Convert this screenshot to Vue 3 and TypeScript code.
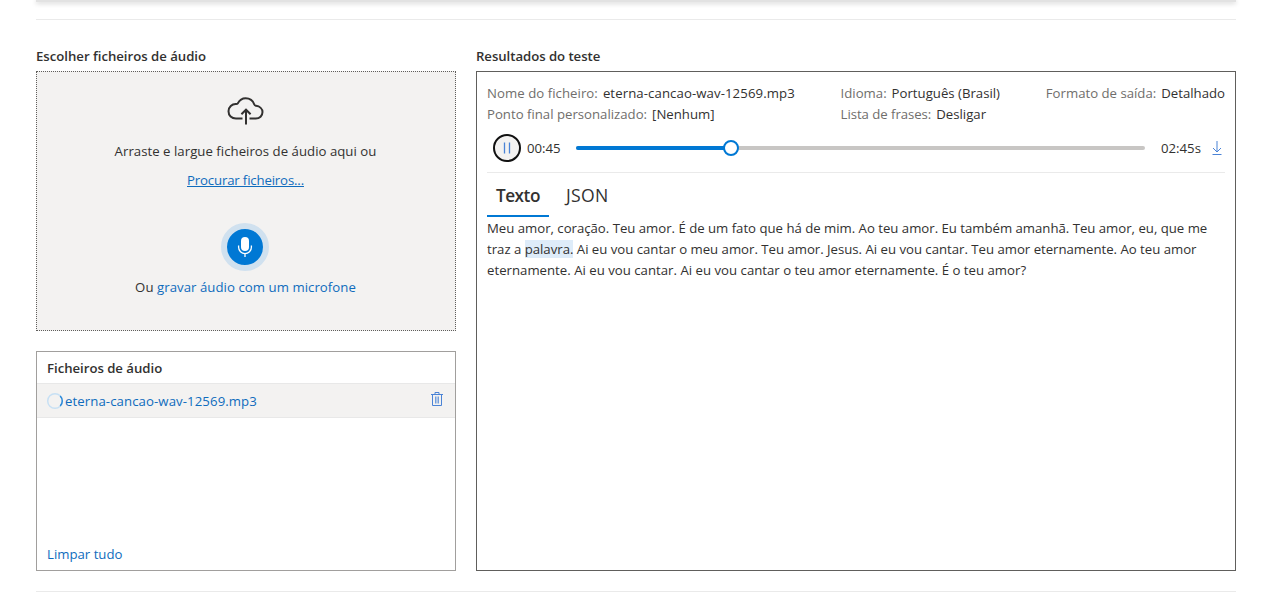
<script setup lang="ts">
interface Detail {
  label: string
  value: string
  key: string
}

const details: Detail[][] = [
  [
    { label: 'Nome do ficheiro:', value: 'eterna-cancao-wav-12569.mp3', key: 'name' },
    { label: 'Ponto final personalizado:', value: '[Nenhum]', key: 'endpoint' },
  ],
  [
    { label: 'Idioma:', value: 'Português (Brasil)', key: 'lang' },
    { label: 'Lista de frases:', value: 'Desligar', key: 'phrases' },
  ],
  [{ label: 'Formato de saída:', value: 'Detalhado', key: 'format' }],
]

const elapsed = 45
const total = 165
const progress = `${((elapsed / total) * 100).toFixed(2)}%`
</script>

<template>
  <main class="page">
    <div class="card-edge"></div>
    <hr class="rule rule-top" />
    <div class="columns">
      <section class="left">
        <h2 class="heading">Escolher ficheiros de áudio</h2>
        <div class="dropzone">
          <svg class="cloud" width="38" height="28" viewBox="0 0 38 28" fill="none" stroke="#323130" stroke-width="2">
            <path d="M16.500 21.600H10C5.600 21.600 2.500 18.400 2.500 14.200c0-4.200 3.500-7.400 7.500-7.200.9.050 1.300 0 1.800-.6C13.600 3 16.300 1.300 19.600 1.300c4.100 0 7.400 2.500 8.700 6.200.3.900.8 1.200 1.700 1.300 3.700.4 6.500 3 6.500 6.300 0 3.700-2.900 6.500-6.700 6.500h-6.300" />
            <path d="M20 27.500V13M15.400 17.300l4.600-4.600 4.600 4.600" />
          </svg>
          <p class="drop-text">Arraste e largue ficheiros de áudio aqui ou</p>
          <a class="browse">Procurar ficheiros...</a>
          <div class="mic">
            <svg width="16" height="22" viewBox="0 0 16 22">
              <rect x="4" y="1" width="8" height="14" rx="4" fill="#fff" />
              <path d="M1.600 9.500v1.700a6.400 6.400 0 0 0 12.800 0V9.500M8 17.500V21" fill="none" stroke="#fff" stroke-width="1.300" />
            </svg>
          </div>
          <p class="record">Ou <a>gravar áudio com um microfone</a></p>
        </div>
        <div class="files">
          <h3 class="files-title">Ficheiros de áudio</h3>
          <div class="file-row">
            <svg class="spinner" width="18" height="18" viewBox="0 0 18 18" fill="none" stroke-width="1.500">
              <circle cx="9" cy="9" r="7.300" stroke="#c7e0f4" />
              <path d="M14.200 3.900A7.300 7.300 0 0 1 14.200 14.100" stroke="#2b88d8" />
            </svg>
            <a class="file-name">eterna-cancao-wav-12569.mp3</a>
            <svg class="trash" width="12" height="15" viewBox="0 0 12 15" fill="none" stroke="#4a83d6">
              <path d="M0 2.500h12M4 2.500v-2h4v2M1.500 2.500v11h9v-11" />
              <path d="M4.500 4.500v7M6 4.500v7M7.500 4.500v7" stroke-opacity=".75" />
            </svg>
          </div>
          <a class="clear">Limpar tudo</a>
        </div>
      </section>
      <section class="right">
        <h2 class="heading results-heading">Resultados do teste</h2>
        <div class="results">
          <div class="details">
            <div v-for="(group, i) in details" :key="i" class="detail-group">
              <div v-for="d in group" :key="d.key" class="detail" :class="d.key">
                <span class="label">{{ d.label }}</span><span class="value">{{ d.value }}</span>
              </div>
            </div>
          </div>
          <div class="player">
            <button class="pause" aria-label="Pausa">
              <svg width="8" height="12" viewBox="0 0 8 12" stroke="#4a83d6" stroke-width="1.300"><path d="M1.500 0.500v11M6.500 0.500v11" /></svg>
            </button>
            <span class="time">00:45</span>
            <div class="track">
              <div class="fill" :style="{ width: progress }"><i class="thumb"></i></div>
            </div>
            <span class="time end">02:45s</span>
            <svg class="download" width="10" height="14" viewBox="0 0 10 14" fill="none" stroke="#4a83d6">
              <path d="M5 0v11M1 7l4 4 4-4M0.500 13.500h9" />
            </svg>
          </div>
          <div class="tabs">
            <div class="tab active">Texto</div>
            <div class="tab json">JSON</div>
          </div>
          <div class="transcript">
            <p>Meu amor, coração. Teu amor. É de um fato que há de mim. Ao teu amor. Eu também amanhã. Teu amor, eu, que me</p>
            <p>traz a <mark>palavra.</mark> Ai eu vou cantar o meu amor. Teu amor. Jesus. Ai eu vou cantar. Teu amor eternamente. Ao teu amor</p>
            <p class="last">eternamente. Ai eu vou cantar. Ai eu vou cantar o teu amor eternamente. É o teu amor?</p>
          </div>
        </div>
      </section>
    </div>
    <hr class="rule rule-bottom" />
  </main>
</template>

<style>
body { background: #fff; overflow: hidden; }
</style>

<style scoped>
.page { box-sizing: border-box; width: 1287px; height: 598px; overflow: hidden; padding: 0 51px 0 36px; font: 13.2px/21px "Open Sans", "Noto Sans", sans-serif; color: #323130; white-space: nowrap; }
.page * { box-sizing: border-box; }
h2, h3, p { margin: 0; }
a { color: #0f6cbd; }
.card-edge { height: 2px; background: #e2e2e2; box-shadow: 0 1px 5px rgba(0, 0, 0, 0.28); }
.rule { border: 0; height: 1px; background: #eaeaea; margin: 0; }
.rule-top { margin-top: 17px; }
.rule-bottom { margin-top: 20px; }
.columns { display: flex; gap: 20px; margin-top: 26px; }
.left { width: 420px; }
.right { width: 760px; }
.heading { height: 25px; font-size: 13.2px; font-weight: 600; line-height: 21px; letter-spacing: -0.02px; }
.results-heading { letter-spacing: -0.05px; }
.dropzone { height: 260px; border: 1px dotted #605e5c; background: #f3f2f1; display: flex; flex-direction: column; align-items: center; padding-right: 2px; }
.cloud { margin-top: 25px; flex: none; }
.drop-text { margin-top: 16px; padding-left: 1px; letter-spacing: 0.03px; }
.browse { margin-top: 8px; margin-left: 1px; text-decoration: underline; letter-spacing: -0.15px; }
.mic { width: 48px; height: 48px; margin-top: 32px; border-radius: 50%; border: 6px solid #d0e1ef; background: #0078d4; display: flex; align-items: center; justify-content: center; }
.record { margin-top: 6px; padding-left: 1px; letter-spacing: 0.05px; }
.files { height: 220px; margin-top: 20px; border: 1px solid #a19f9d; display: flex; flex-direction: column; align-items: flex-start; }
.files-title { height: 31px; padding: 6px 0 0 10px; font-size: 13.2px; line-height: 21px; font-weight: 600; letter-spacing: -0.03px; }
.file-row { width: 100%; height: 35px; padding: 0 12px 0 9px; background: #f3f2f1; border: 1px solid #e8e8e8; border-width: 1px 0; display: flex; align-items: center; }
.file-name { margin-left: 1px; padding-top: 2px; letter-spacing: 0.09px; }
.trash { margin: -2px 0 0 auto; }
.clear { margin: auto 0 5px 10px; }
.results { height: 500px; border: 1px solid #605e5c; padding: 11px 10px 10px; }
.details { display: flex; justify-content: space-between; }
.label { color: #706e6c; margin-right: 5px; }
.name .label { letter-spacing: 0.05px; }
.name .value { letter-spacing: 0.09px; }
.phrases .label { letter-spacing: -0.05px; }
.player { height: 48px; border-bottom: 1px solid #eaeaea; display: flex; align-items: center; padding: 0 3px 2px 6px; }
.pause { width: 28px; height: 28px; padding: 0; border: 2px solid #111; border-radius: 50%; background: #f3f2f1; display: flex; align-items: center; justify-content: center; }
.time { margin-left: 6px; width: 49px; padding-top: 1px; }
.track { width: 569px; height: 4px; border-radius: 2px; background: #c8c6c4; }
.fill { height: 4px; border-radius: 2px; background: #0078d4; position: relative; }
.thumb { position: absolute; right: -8px; top: -6px; width: 16px; height: 16px; border: 2px solid #0078d4; border-radius: 50%; background: #fff; }
.end { margin-left: 16px; }
.download { margin-left: auto; }
.tabs { display: flex; gap: 8px; height: 44px; line-height: 45px; }
.tab { padding: 0 9px; }
.active { width: 62px; font-size: 17.2px; font-weight: 600; letter-spacing: -0.5px; border-bottom: 2px solid #0078d4; }
.json { font-size: 17.6px; letter-spacing: 0.3px; }
.transcript { padding-top: 1px; }
.transcript p { letter-spacing: -0.014px; }
.transcript .last { letter-spacing: 0.01px; }
mark { background: #deecf9; color: inherit; }
</style>
